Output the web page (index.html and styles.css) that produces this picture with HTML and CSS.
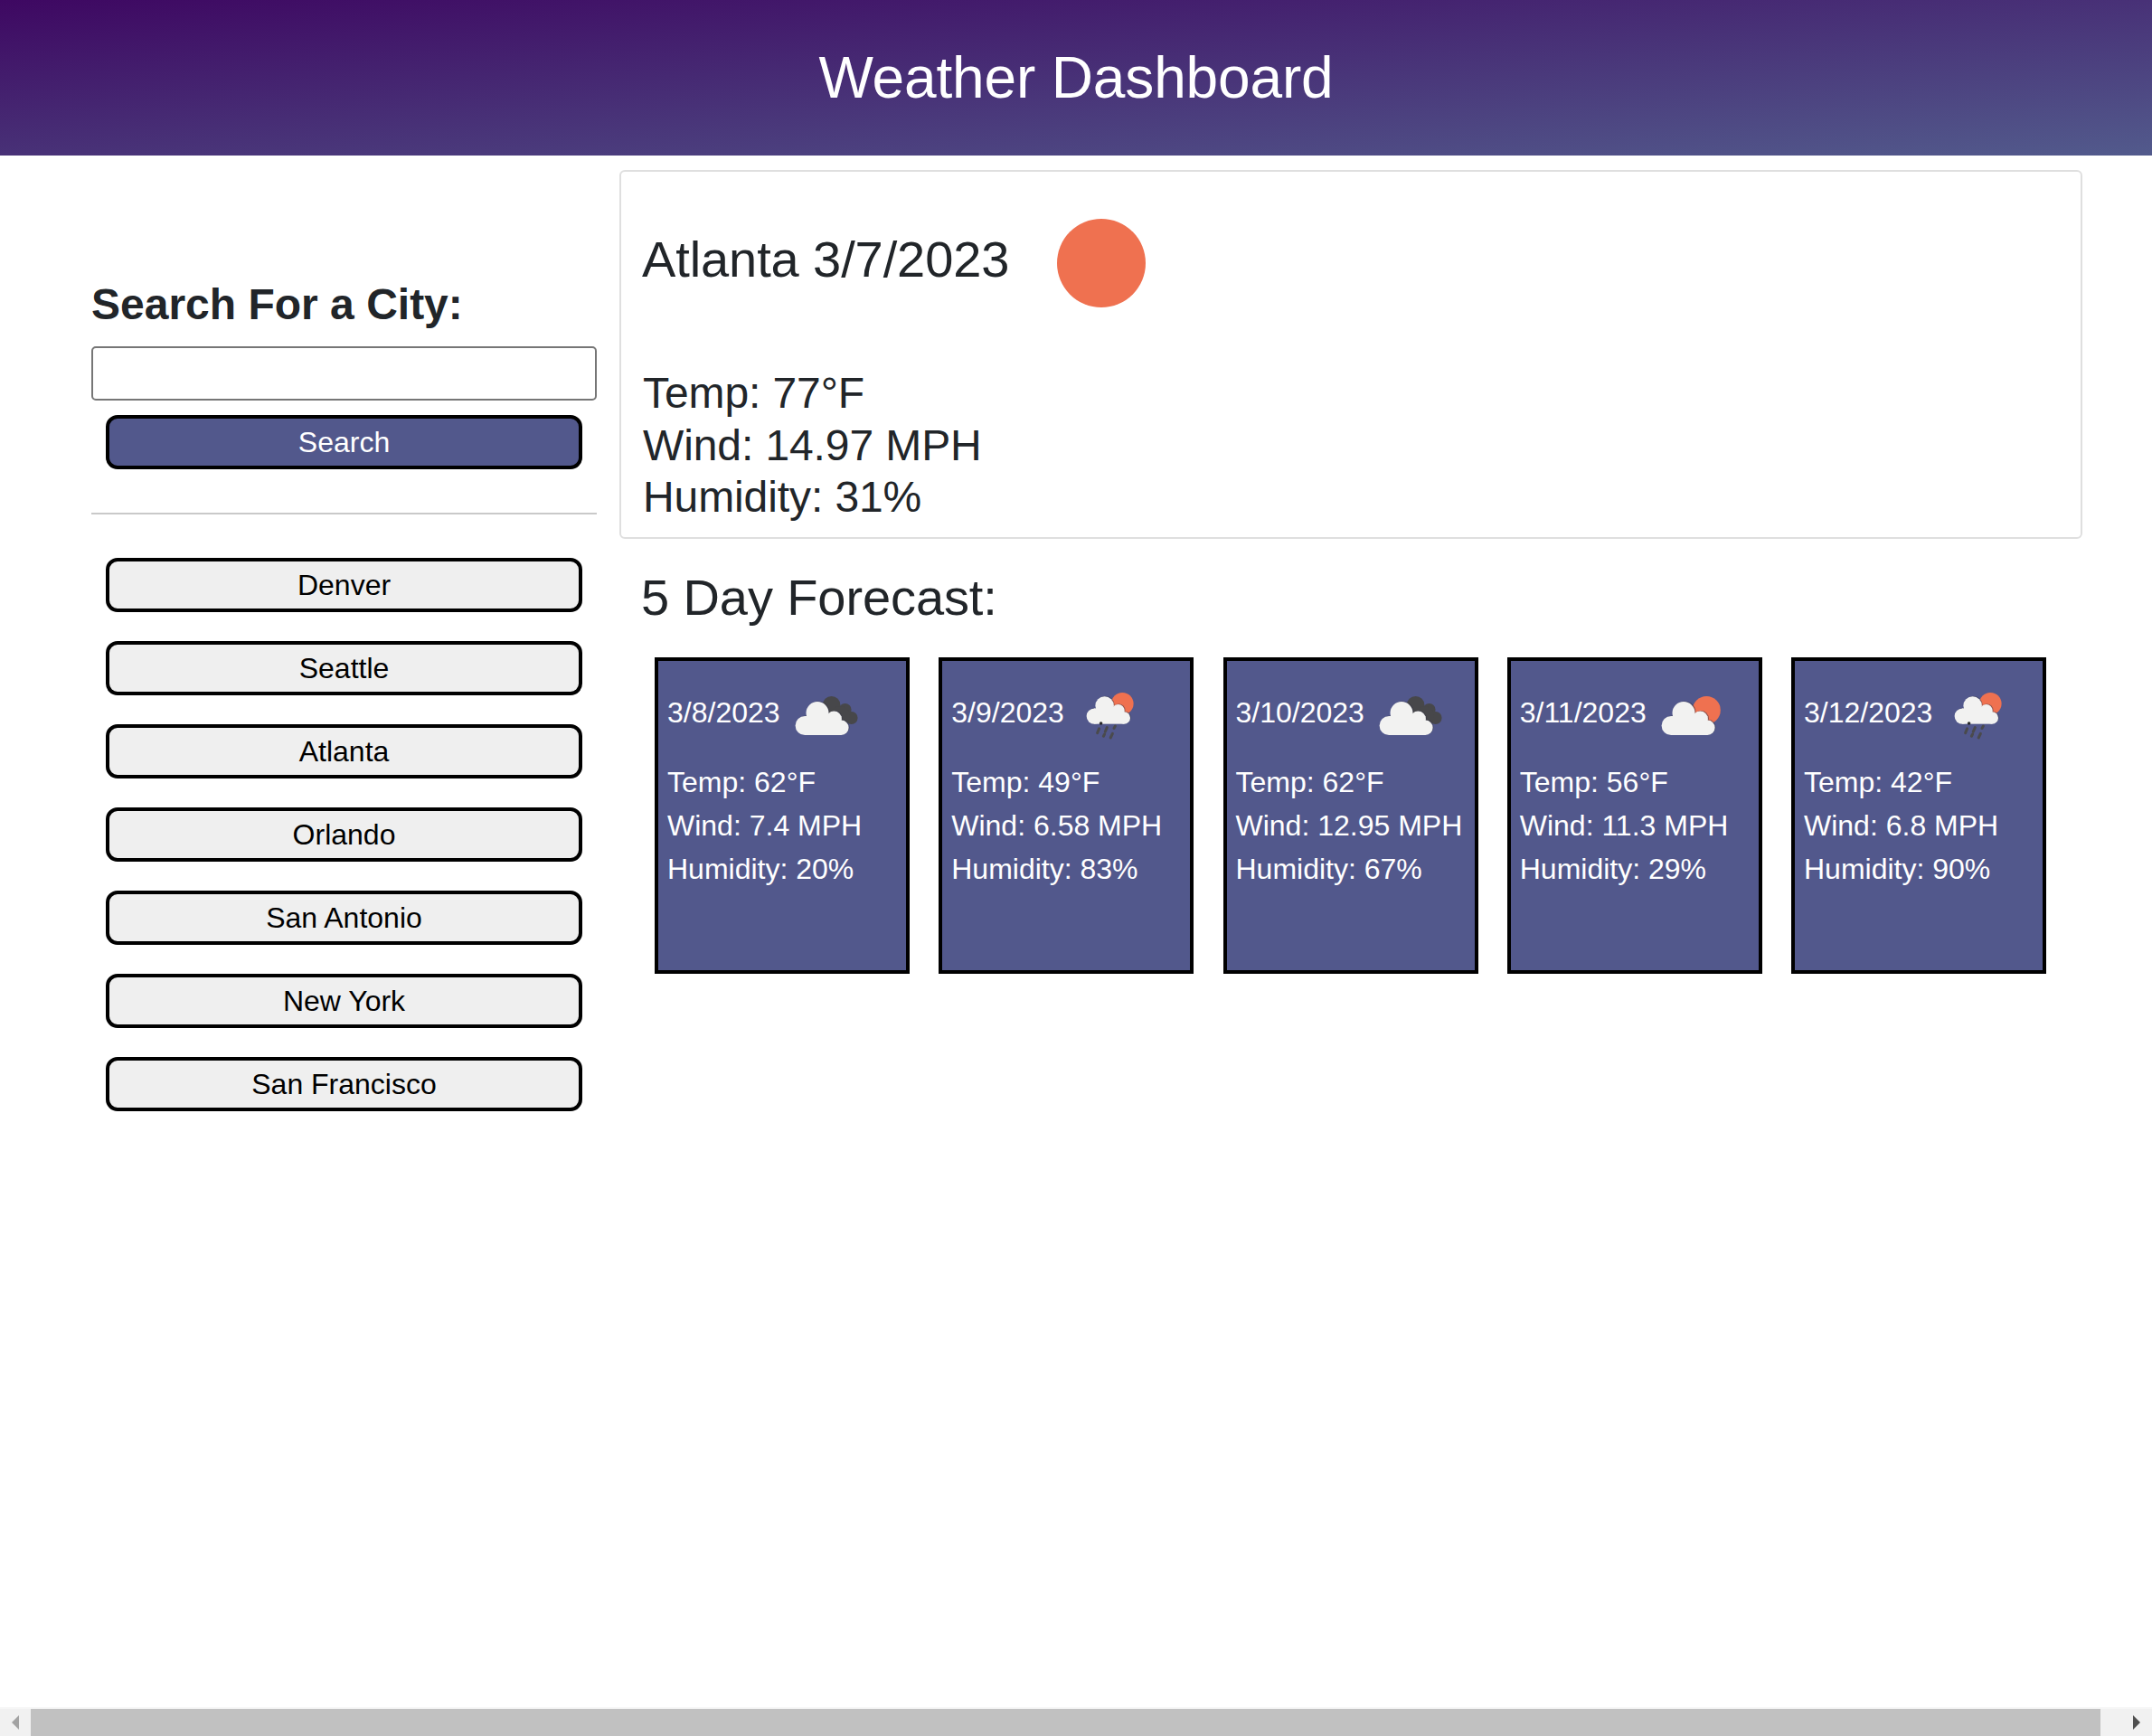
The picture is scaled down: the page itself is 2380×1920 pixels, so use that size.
FILE: index.html
```html
<!DOCTYPE html>
<html lang="en">
<head>
<meta charset="utf-8">
<title>Weather Dashboard</title>
<link rel="stylesheet" href="styles.css">
</head>
<body>
<svg class="defs" width="0" height="0" aria-hidden="true">
  <defs>
    <g id="cloud-shape">
      <circle cx="31" cy="38.5" r="12.5"/>
      <circle cx="49.3" cy="45" r="8.5"/>
      <circle cx="57.4" cy="54.8" r="8.2"/>
      <circle cx="17.1" cy="52.5" r="10.5"/>
      <rect x="17" y="42" width="40.4" height="21"/>
    </g>
    <g id="cloud">
      <use href="#cloud-shape" transform="translate(1 -0.6)" class="cloud-shadow"/>
      <use href="#cloud-shape" class="cloud-white"/>
    </g>
    <symbol id="icon-clouds" viewBox="0 0 80 80">
      <g class="dark">
        <circle cx="46.6" cy="29.7" r="9.8"/>
        <circle cx="61.6" cy="35" r="7"/>
        <circle cx="68.6" cy="44" r="7"/>
        <circle cx="56" cy="42" r="11"/>
      </g>
      <use href="#cloud"/>
    </symbol>
    <symbol id="icon-sun-cloud" viewBox="0 0 80 80">
      <circle class="sun" cx="56.3" cy="35.5" r="15.5"/>
      <use href="#cloud"/>
    </symbol>
    <symbol id="icon-rain" viewBox="0 0 80 80">
      <circle class="sun" cx="54.3" cy="28.3" r="12.3"/>
      <use href="#cloud" transform="translate(9.2 -1) scale(.82)"/>
      <circle class="drop-top" cx="30.6" cy="50" r="1.8"/>
      <path class="rain" d="M28.6 55.8 26.6 60.6M37.3 54.6 35.3 59.2M46.4 53 45 55.4M34.6 62 33.4 64.2M43.4 61.4 41.2 66"/>
    </symbol>
  </defs>
</svg>
<div class="page">
  <header class="topbar"><h1 class="topbar-title">Weather Dashboard</h1></header>
  <div class="layout">
    <aside class="sidebar">
      <h3 class="search-title">Search For a City:</h3>
      <input class="search-input" type="text" aria-label="City">
      <button class="btn btn-primary" type="button">Search</button>
      <hr class="divider">
      <div class="history">
        <button class="btn" type="button">Denver</button>
        <button class="btn" type="button">Seattle</button>
        <button class="btn" type="button">Atlanta</button>
        <button class="btn" type="button">Orlando</button>
        <button class="btn" type="button">San Antonio</button>
        <button class="btn" type="button">New York</button>
        <button class="btn" type="button">San Francisco</button>
      </div>
    </aside>
    <main class="content">
      <section class="current">
        <div class="current-head">
          <h2 class="current-title">Atlanta 3/7/2023</h2>
          <svg class="current-icon" viewBox="0 0 160 160" aria-hidden="true"><circle class="sun" cx="80" cy="80" r="49"/></svg>
        </div>
        <p class="current-line">Temp: 77°F</p>
        <p class="current-line">Wind: 14.97 MPH</p>
        <p class="current-line">Humidity: 31%</p>
      </section>
      <h2 class="forecast-title">5 Day Forecast:</h2>
      <div class="forecast">
        <article class="day">
          <div class="day-head"><span>3/8/2023</span><svg class="day-icon"><use href="#icon-clouds"/></svg></div>
          <p class="day-line">Temp: 62°F</p><p class="day-line">Wind: 7.4 MPH</p><p class="day-line">Humidity: 20%</p>
        </article>
        <article class="day">
          <div class="day-head"><span>3/9/2023</span><svg class="day-icon"><use href="#icon-rain"/></svg></div>
          <p class="day-line">Temp: 49°F</p><p class="day-line">Wind: 6.58 MPH</p><p class="day-line">Humidity: 83%</p>
        </article>
        <article class="day">
          <div class="day-head"><span>3/10/2023</span><svg class="day-icon"><use href="#icon-clouds"/></svg></div>
          <p class="day-line">Temp: 62°F</p><p class="day-line">Wind: 12.95 MPH</p><p class="day-line">Humidity: 67%</p>
        </article>
        <article class="day">
          <div class="day-head"><span>3/11/2023</span><svg class="day-icon"><use href="#icon-sun-cloud"/></svg></div>
          <p class="day-line">Temp: 56°F</p><p class="day-line">Wind: 11.3 MPH</p><p class="day-line">Humidity: 29%</p>
        </article>
        <article class="day">
          <div class="day-head"><span>3/12/2023</span><svg class="day-icon"><use href="#icon-rain"/></svg></div>
          <p class="day-line">Temp: 42°F</p><p class="day-line">Wind: 6.8 MPH</p><p class="day-line">Humidity: 90%</p>
        </article>
      </div>
    </main>
  </div>
  <div class="scrollbar" aria-hidden="true">
    <div class="scroll-end"><span class="arrow arrow-left"></span></div>
    <div class="scroll-thumb"></div>
    <div class="scroll-end scroll-end-right"><span class="arrow arrow-right"></span></div>
  </div>
</div>
</body>
</html>
```
FILE: styles.css
```css
* { box-sizing: border-box; }
html, body { margin: 0; padding: 0; overflow: hidden; }
body {
  font-family: "Liberation Sans", Arial, sans-serif;
  color: #212529;
  background: #fff;
}
.defs { position: absolute; }
.page { display: flex; flex-direction: column; height: 1920px; width: 2380px; }

.topbar {
  height: 172px;
  flex: none;
  display: flex;
  align-items: center;
  justify-content: center;
  background: linear-gradient(to bottom right, #3e0862, #525a8c);
}
.topbar-title { margin: 0; font-size: 64px; font-weight: 400; line-height: 1.2; color: #fff; letter-spacing: -.15px; }

.layout { flex: 1; display: flex; align-items: flex-start; padding-left: 101px; gap: 25px; }

.sidebar { width: 559px; flex: none; padding-top: 136px; }
.search-title { margin: 0 0 17px; font-size: 48px; font-weight: 700; line-height: 1.2; }
.search-input {
  display: block;
  width: 100%;
  height: 60px;
  border: 2px solid #767676;
  border-radius: 5px;
  background: #fff;
}
.btn {
  display: block;
  width: 527px;
  height: 60px;
  margin: 0 auto;
  padding: 1px 0 0;
  border: 4px solid #000;
  border-radius: 13px;
  background: #efefef;
  color: #000;
  font: 32px/1.2 "Liberation Sans", Arial, sans-serif;
}
.btn-primary { margin-top: 16px; background: #52588c; color: #fff; }
.divider { margin: 48px 0 48px; border: 0; height: 2px; background: #c9c9c9; }
.history { display: flex; flex-direction: column; gap: 32px; }

.content { width: 1618px; flex: none; padding-top: 16px; }
.current {
  height: 408px;
  padding: 0 24px;
  border: 2px solid #dfdfdf;
  border-radius: 6px;
}
.current-head { display: flex; align-items: center; height: 216px; }
.current-title { margin: 0 0 23px -1px; font-size: 56px; font-weight: 400; line-height: 1.2; letter-spacing: -.1px; }
.current-icon { width: 160px; height: 160px; margin: 0 0 14px 22px; }
.sun { fill: #ef7150; }
.current-line { margin: 0; font-size: 48px; line-height: 57.6px; letter-spacing: -.1px; }

.forecast-title { margin: 31px 0 33px 24px; font-size: 56px; font-weight: 400; line-height: 1.2; letter-spacing: -.1px; }
.forecast { display: flex; gap: 32.25px; padding-left: 39px; }
.day {
  width: 282px;
  height: 350px;
  padding: 19px 10px 0;
  border: 4px solid #000;
  background: #52588c;
  color: #fff;
}
.day-head { display: flex; align-items: center; gap: 9px; height: 80px; margin-bottom: 11px; font-size: 32px; }
.day-head span { margin-bottom: 4px; }
.day-icon { width: 80px; height: 80px; flex: none; margin-left: 1px; }
.day-line { margin: 0; font-size: 32px; line-height: 48px; white-space: nowrap; }

.dark { fill: #47474a; }
.cloud-white { fill: #f2f2f1; }
.cloud-shadow { fill: #3a3a4a; opacity: .55; }
.drop-top { fill: #2a2a2a; }
.rain { fill: none; stroke: #4a4a4c; stroke-width: 3; stroke-linecap: round; }

.scrollbar { margin-top: auto; height: 32px; flex: none; display: flex; padding-top: 2px; background: #f7f7f7; }
.scroll-end { width: 34px; height: 30px; flex: none; display: flex; align-items: center; background: #f1f1f1; padding-left: 13px; }
.scroll-end-right { width: 57px; padding-left: 36px; }
.scroll-thumb { flex: 1; background: #c1c1c1; }
.arrow { display: block; width: 0; height: 0; border-top: 8px solid transparent; border-bottom: 8px solid transparent; }
.arrow-left { border-right: 8px solid #a3a3a3; }
.arrow-right { border-left: 8px solid #505050; }
```
